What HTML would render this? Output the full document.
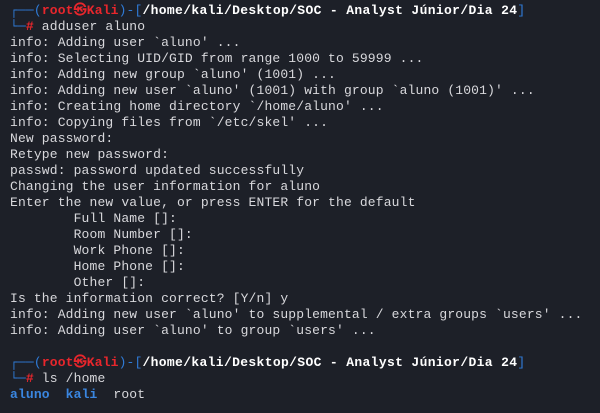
<!DOCTYPE html><html><head><style>
body{margin:0;background:#1d2028;width:600px;height:413px;overflow:hidden}
pre{margin:0;padding:3px 0 0 10px;font:13px/16px "Liberation Mono","DejaVu Sans Mono",monospace;letter-spacing:0.15px;color:#d8d8dc}
.b{color:#2f7bd8}.r{color:#e8262c;font-weight:bold}.w{color:#fff;font-weight:bold;letter-spacing:0.35px}.bb{color:#3a86e0;font-weight:bold}
</style></head><body><pre><span class="b">┌──(</span><span class="r">root㉿Kali</span><span class="b">)-[</span><span class="w">/home/kali/Desktop/SOC - Analyst Júnior/Dia 24</span><span class="b">]</span>
<span class="b">└─</span><span class="r">#</span> adduser aluno
info: Adding user `aluno' ...
info: Selecting UID/GID from range 1000 to 59999 ...
info: Adding new group `aluno' (1001) ...
info: Adding new user `aluno' (1001) with group `aluno (1001)' ...
info: Creating home directory `/home/aluno' ...
info: Copying files from `/etc/skel' ...
New password:
Retype new password:
passwd: password updated successfully
Changing the user information for aluno
Enter the new value, or press ENTER for the default
        Full Name []:
        Room Number []:
        Work Phone []:
        Home Phone []:
        Other []:
Is the information correct? [Y/n] y
info: Adding new user `aluno' to supplemental / extra groups `users' ...
info: Adding user `aluno' to group `users' ...

<span class="b">┌──(</span><span class="r">root㉿Kali</span><span class="b">)-[</span><span class="w">/home/kali/Desktop/SOC - Analyst Júnior/Dia 24</span><span class="b">]</span>
<span class="b">└─</span><span class="r">#</span> ls /home
<span class="bb">aluno</span>  <span class="bb">kali</span>  root</pre></body></html>
